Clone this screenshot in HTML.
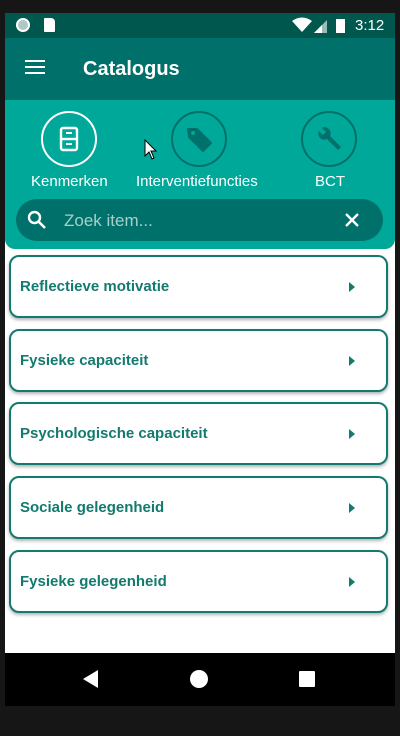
<!DOCTYPE html><html><head><style>
body{margin:0;width:400px;height:736px;background:#161616;position:relative;overflow:hidden;font-family:"Liberation Sans",sans-serif}
.scr{position:absolute;left:5px;top:13px;width:390px;height:640px;background:#fff;overflow:hidden}
.sb{position:absolute;left:0;top:0;width:390px;height:25px;background:#00574d}
.tb{position:absolute;left:0;top:25px;width:390px;height:62px;background:#00706a}
.teal{position:absolute;left:0;top:87px;width:390px;height:149px;background:#00a89a;border-radius:0 0 10px 10px}
.circ{position:absolute;width:52px;height:52px;border-radius:50%;border:2px solid #00706a;top:11px}
.lbl{position:absolute;top:73px;color:#fff;font-size:15px;text-align:center}
.search{position:absolute;left:11px;top:99px;width:367px;height:42px;border-radius:21px;background:#00706a}
.card{position:absolute;left:4px;width:375px;height:59px;border:2px solid #127a6e;border-radius:10px;box-shadow:0 2px 3px rgba(0,0,0,.3);background:#fff}
.card span{position:absolute;left:9px;top:21px;font-weight:bold;font-size:15px;color:#127a6e}
.card i{position:absolute;right:31px;top:25px;border-left:6px solid #127a6e;border-top:5px solid transparent;border-bottom:5px solid transparent}
.nav{position:absolute;left:5px;top:653px;width:390px;height:53px;background:#000}
</style></head><body>
<div class="scr">
<div class="sb">
<div style="position:absolute;left:11px;top:5px;width:10px;height:10px;border-radius:50%;border:2px solid #fff;background:#b0c8c4"></div>
<div style="position:absolute;left:39px;top:5px;width:11px;height:14px;background:#fff;border-radius:1px 4px 1px 1px"></div>
<svg style="position:absolute;left:287px;top:4px" width="60" height="18"><path d="M0 4 Q10 -3 20 4 L10 15Z" fill="#fff"/><path d="M22 16 L35 3 V16Z" fill="#fff" opacity=".6"/><path d="M22 16 L30 8 V16Z" fill="#fff"/><rect x="44" y="2" width="9" height="14" fill="#fff"/></svg>
<div style="position:absolute;left:350px;top:4px;color:#fff;font-size:15px">3:12</div>
</div>
<div class="tb">
<div style="position:absolute;left:20px;top:22px;width:20px;height:2px;background:#fff;box-shadow:0 6px #fff,0 12px #fff"></div>
<div style="position:absolute;left:78px;top:20px;color:#fff;font-size:20px;font-weight:bold">Catalogus</div>
</div>
<div class="teal">
<div class="circ" style="left:36px;border-color:#fff"><svg width="52" height="52"><rect x="18" y="15" width="16" height="22" rx="2" fill="none" stroke="#fff" stroke-width="2.4"/><line x1="18" y1="26" x2="34" y2="26" stroke="#fff" stroke-width="2.4"/><line x1="23" y1="20" x2="29" y2="20" stroke="#fff" stroke-width="2"/><line x1="23" y1="31" x2="29" y2="31" stroke="#fff" stroke-width="2"/></svg></div>
<div class="circ" style="left:166px"><svg width="52" height="52"><path d="M15 16 L24 16 L38 30 L30 38 L16 24Z" fill="#00706a" stroke="#00706a" stroke-linejoin="round" stroke-width="2"/><circle cx="20" cy="20" r="2" fill="#00a89a"/></svg></div>
<div class="circ" style="left:296px"><svg width="52" height="52"><path d="M16 18 a6 6 0 0 0 8 8 L35 37 L38 34 L27 23 a6 6 0 0 0 -8 -8 l4 4 -3 3z" fill="#00706a"/></svg></div>
<div class="lbl" style="left:26px">Kenmerken</div>
<div class="lbl" style="left:131px">Interventiefuncties</div>
<div class="lbl" style="left:310px">BCT</div>
<svg style="position:absolute;left:139px;top:39px" width="14" height="22"><path d="M1 1 V17 L5 13 L8 20 L10 19 L7 12 L12 12Z" fill="#fff" stroke="#000"/></svg>
<div class="search">
<svg style="position:absolute;left:11px;top:11px" width="20" height="20"><circle cx="7.5" cy="7.5" r="5.5" fill="none" stroke="#fff" stroke-width="2.4"/><line x1="11.5" y1="11.5" x2="18" y2="18" stroke="#fff" stroke-width="2.6"/></svg>
<div style="position:absolute;left:48px;top:12px;color:#a8d0ca;font-size:17px">Zoek item...</div>
<svg style="position:absolute;left:329px;top:14px" width="14" height="14"><path d="M1 1L13 13M13 1L1 13" stroke="#fff" stroke-width="2.4"/></svg>
</div>
</div>
<div class="card" style="top:242px"><span>Reflectieve motivatie</span><i></i></div>
<div class="card" style="top:316px"><span>Fysieke capaciteit</span><i></i></div>
<div class="card" style="top:389px"><span>Psychologische capaciteit</span><i></i></div>
<div class="card" style="top:463px"><span>Sociale gelegenheid</span><i></i></div>
<div class="card" style="top:537px"><span>Fysieke gelegenheid</span><i></i></div>
</div>
<div class="nav">
<svg width="390" height="53"><path d="M78 26 L93 17 V35Z" fill="#fff"/><circle cx="194" cy="26" r="9" fill="#fff"/><rect x="294" y="18" width="16" height="16" rx="1" fill="#fff"/></svg>
</div>
</body></html>
